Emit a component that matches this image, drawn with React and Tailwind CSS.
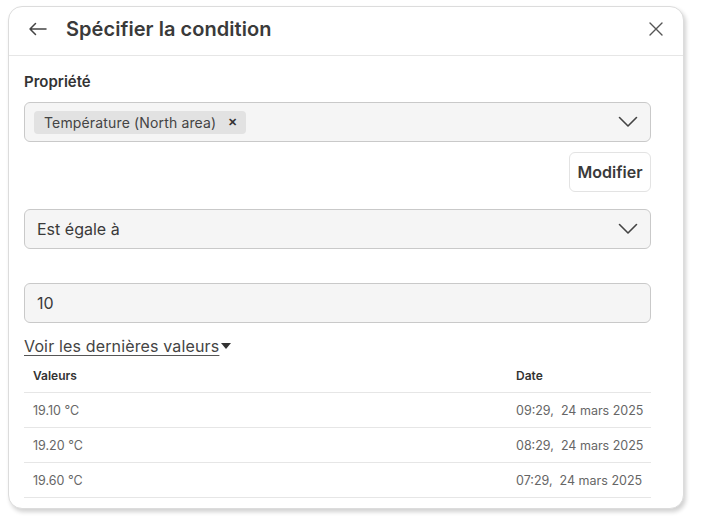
import React from "react";

function Chevron() {
  return (
    <svg width="20" height="12" viewBox="0 0 20 12" fill="none" className="text-[#444]">
      <polyline points="1.5,1.5 10,10 18.5,1.5" stroke="currentColor" strokeWidth="1.6" strokeLinecap="round" strokeLinejoin="round" />
    </svg>
  );
}

const rows = [
  ["19.10 °C", "09:29,  24 mars 2025"],
  ["19.20 °C", "08:29,  24 mars 2025"],
  ["19.60 °C", "07:29,  24 mars 2025"],
];

export default function App() {
  return (
    <div className="w-[701px] h-[520px] bg-white pt-[6px] pl-[8px]" style={{ fontFamily: "Inter, 'Noto Sans', sans-serif" }}>
      <div className="w-[676px] h-[503px] bg-white border border-[#dcdcdc] rounded-[14px] shadow-[2px_3px_4px_rgba(0,0,0,0.18)] flex flex-col overflow-hidden">
        <div className="h-[49px] shrink-0 border-b border-[#e6e6e6] flex items-center pl-[19px] pr-[20px] pb-[5px]">
          <svg width="19" height="14" viewBox="0 0 19 14" fill="none" className="text-[#444]">
            <path d="M18 7H2M7.5 1.5L2 7l5.5 5.5" stroke="currentColor" strokeWidth="1.5" strokeLinecap="round" strokeLinejoin="round" />
          </svg>
          <div className="ml-[19px] text-[20px] font-semibold text-[#3a3a3a] tracking-[0.05px]">Spécifier la condition</div>
          <div className="ml-auto">
            <svg width="14" height="14" viewBox="0 0 14 14" fill="none" className="text-[#555]">
              <path d="M1 1l12 12M13 1L1 13" stroke="currentColor" strokeWidth="1.4" strokeLinecap="round" />
            </svg>
          </div>
        </div>
        <div className="pl-[15px] pr-[32px] pt-[16px] flex flex-col">
          <div className="text-[15px] leading-[20px] font-semibold text-[#333]">Propriété</div>
          <div className="mt-[10px] h-[40px] rounded-[6px] border border-[#c9c9c9] bg-[#f5f5f5] flex items-center pl-[9px] pr-[12px]">
            <div className="h-[23px] rounded-[4px] bg-[#e2e2e2] flex items-center pl-[10px] pr-[8px] text-[14px] tracking-[0.15px] text-[#444]">
              Température (North area)
              <span className="ml-[12px] text-[11px] font-bold text-[#333]">✕</span>
            </div>
            <div className="ml-auto"><Chevron /></div>
          </div>
          <div className="mt-[10px] flex justify-end">
            <div className="w-[82px] h-[40px] rounded-[6px] border border-[#e3e3e3] flex items-center justify-center text-[16px] font-semibold text-[#3a3a3a]">Modifier</div>
          </div>
          <div className="mt-[17px] h-[40px] rounded-[6px] border border-[#c9c9c9] bg-[#f5f5f5] flex items-center pl-[12px] pr-[12px] text-[16px] text-[#3a3a3a]">
            Est égale à
            <div className="ml-auto"><Chevron /></div>
          </div>
          <div className="mt-[34px] h-[40px] rounded-[6px] border border-[#c9c9c9] bg-[#f5f5f5] flex items-center pl-[12px] text-[16px] text-[#3a3a3a]">
            10
          </div>
          <div className="mt-[11px] h-[24px] flex items-center text-[16px] tracking-[0.15px] text-[#444]">
            <span className="underline underline-offset-[3px] decoration-[#555]">Voir les dernières valeurs</span>
            <svg width="10" height="6" viewBox="0 0 10 6" className="ml-[2px] text-[#333]"><path d="M0 0h10L5 6z" fill="currentColor" /></svg>
          </div>
          <div className="mt-[1px]">
            <div className="h-[34px] grid grid-cols-[483px_1fr] px-[9px] items-center border-b border-[#e6e6e6] text-[12px] font-semibold text-[#333]">
              <div>Valeurs</div>
              <div>Date</div>
            </div>
            {rows.map((r) => (
              <div key={r[0]} className="h-[35px] grid grid-cols-[483px_1fr] px-[9px] pt-[2px] items-center border-b border-[#e6e6e6] text-[12.5px] text-[#666]">
                <div>{r[0]}</div>
                <div className="whitespace-pre">{r[1]}</div>
              </div>
            ))}
          </div>
        </div>
      </div>
    </div>
  );
}
